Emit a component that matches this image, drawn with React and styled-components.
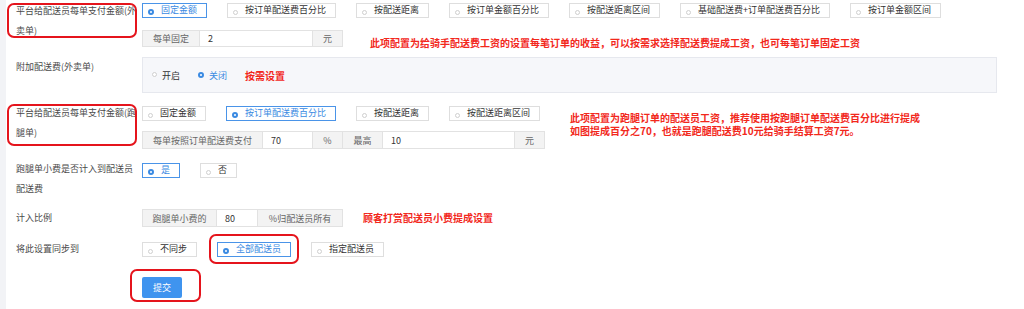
import React from 'react'
import styled, { createGlobalStyle, css } from 'styled-components'

const GlobalStyle = createGlobalStyle`
  body {
    margin: 0;
    background: #fff;
    font-family: "Noto Sans CJK SC", "Noto Sans", sans-serif;
  }
`

// red annotation frame drawn over a part
const mark = css`
  position: relative;
  &::after {
    content: '';
    position: absolute;
    inset: ${p => p.$mark};
    border: 2px solid #e5141c;
    border-radius: 7px;
    pointer-events: none;
  }
`

const Page = styled.div`
  width: 1024px;
  height: 309px;
  box-sizing: border-box;
  border-left: 6px solid #f2f3f6;
  padding: 1px 0 0 10px;
  display: flex;
  flex-direction: column;
  gap: 10px;
  overflow: hidden;
`

const Row = styled.div`
  display: grid;
  grid-template-columns: 126px 1fr;
  align-items: ${p => (p.$center ? 'center' : 'start')};
  margin-top: ${p => p.$mt || 0}px;
`

const Label = styled.div`
  width: 121px;
  font-size: 9px;
  line-height: ${p => p.$lh || 20}px;
  color: #4a4a4a;
  ${p => p.$mark && mark}
`

const Controls = styled.div`
  display: flex;
  flex-direction: column;
  align-items: flex-start;
  gap: ${p => p.$gap || 0}px;
  padding-top: ${p => p.$pt || 0}px;
`

const Line = styled.div`
  display: flex;
  align-items: flex-start;
  height: ${p => p.$h}px;
`

const Dot = styled.i`
  flex: none;
  box-sizing: border-box;
  width: ${p => (p.$on ? 6 : 5)}px;
  height: ${p => (p.$on ? 6 : 5)}px;
  border-radius: 50%;
  border: ${p => (p.$on ? '2px solid #3a8ae2' : '1px solid #cfcfcf')};
  background: #fff;
  margin: 0 ${p => p.$gap || 7}px 1px 0;
`

const RadioBox = styled.span`
  display: inline-flex;
  align-items: flex-end;
  height: 15px;
  box-sizing: border-box;
  border: 1px solid ${p => (p.$on ? '#4a94e8' : '#dedede')};
  padding: 0 9px 1px 5px;
  margin-right: 20px;
  font-size: 9px;
  line-height: 12px;
  color: ${p => (p.$on ? '#3a8ae2' : '#333')};
  white-space: nowrap;
  flex: none;
  ${p => p.$mark && mark}
`

const Panel = styled.div`
  width: 855px;
  height: 36px;
  box-sizing: border-box;
  background: #f6f7fa;
  border: 1px solid #e6e8ee;
  display: flex;
  align-items: center;
  padding-left: 9px;
`

const PlainRadio = styled.span`
  display: inline-flex;
  align-items: center;
  margin-right: 18px;
  font-size: 9px;
  color: ${p => (p.$on ? '#3a8ae2' : '#333')};
`

const Note = styled.span`
  color: #f2281c;
  font-weight: 700;
  font-size: 10px;
  line-height: 13px;
  white-space: nowrap;
  margin-left: ${p => p.$ml || 0}px;
  margin-top: ${p => p.$mt || 0}px;
`

const InputGroup = styled.div`
  display: flex;
  height: ${p => p.$h || 17}px;
  font-size: 9px;
  flex: none;
`

const Addon = styled.span`
  width: ${p => p.$w}px;
  box-sizing: border-box;
  border: 1px solid #e2e2e2;
  border-left: none;
  background: #f3f3f3;
  color: #666;
  display: flex;
  align-items: center;
  justify-content: center;
  white-space: nowrap;
  &:first-child {
    border-left: 1px solid #e2e2e2;
  }
`

const Field = styled.span`
  width: ${p => p.$w}px;
  box-sizing: border-box;
  border: 1px solid #e2e2e2;
  border-left: none;
  background: #fff;
  color: #333;
  display: flex;
  align-items: center;
  padding-left: 8px;
`

const Button = styled.button`
  width: 40px;
  height: 21px;
  border: none;
  border-radius: 2px;
  background: #3f94ef;
  color: #fff;
  font-family: inherit;
  font-size: 9px;
  padding: 0;
  ${p => p.$mark && mark}
`

const Radio = ({ on, mark, children }) => (
  <RadioBox $on={on} $mark={mark}>
    <Dot $on={on} />
    {children}
  </RadioBox>
)

const takeawayModes = ['固定金额', '按订单配送费百分比', '按配送距离', '按订单金额百分比', '按配送距离区间', '基础配送费+订单配送费百分比', '按订单金额区间']
const errandModes = ['固定金额', '按订单配送费百分比', '按配送距离', '按配送距离区间']

export default function App() {
  return (
    <Page>
      <GlobalStyle />

      <Row>
        <Label $mark="2px 0 3px -9px">平台给配送员每单支付金额(外卖单)</Label>
        <Controls $pt={2} $gap={12}>
          <Line $h={15}>
            {takeawayModes.map((m, i) => (
              <Radio key={m} on={i === 0}>{m}</Radio>
            ))}
          </Line>
          <Line $h={17}>
            <InputGroup>
              <Addon $w={58}>每单固定</Addon>
              <Field $w={113}>2</Field>
              <Addon $w={30}>元</Addon>
            </InputGroup>
            <Note $ml={27} $mt={6}>
              此项配置为给骑手配送费工资的设置每笔订单的收益，可以按需求选择配送费提成工资，也可每笔订单固定工资
            </Note>
          </Line>
        </Controls>
      </Row>

      <Row>
        <Label>附加配送费(外卖单)</Label>
        <Panel>
          <PlainRadio><Dot $gap={5} />开启</PlainRadio>
          <PlainRadio $on><Dot $on $gap={5} />关闭</PlainRadio>
          <Note>按需设置</Note>
        </Panel>
      </Row>

      <Row>
        <Label $mark="1px 0 -3px -9px">平台给配送员每单支付金额(跑腿单)</Label>
        <Controls $pt={3} $gap={10}>
          <Line $h={15}>
            {errandModes.map((m, i) => (
              <Radio key={m} on={i === 1}>{m}</Radio>
            ))}
            <Note $ml={10} $mt={5}>
              此项配置为跑腿订单的配送员工资，推荐使用按跑腿订单配送费百分比进行提成
              <br />
              如图提成百分之70，也就是跑腿配送费10元给骑手结算工资7元。
            </Note>
          </Line>
          <InputGroup $h={18}>
            <Addon $w={121}>每单按照订单配送费支付</Addon>
            <Field $w={50}>70</Field>
            <Addon $w={30}>%</Addon>
            <Addon $w={40}>最高</Addon>
            <Field $w={132}>10</Field>
            <Addon $w={30}>元</Addon>
          </InputGroup>
        </Controls>
      </Row>

      <Row>
        <Label>跑腿单小费是否计入到配送员配送费</Label>
        <Controls $pt={4}>
          <Line $h={15}>
            <Radio on>是</Radio>
            <Radio>否</Radio>
          </Line>
        </Controls>
      </Row>

      <Row $center>
        <Label $lh={18}>计入比例</Label>
        <Line $h={18}>
          <InputGroup $h={18}>
            <Addon $w={75}>跑腿单小费的</Addon>
            <Field $w={41}>80</Field>
            <Addon $w={85}>%归配送员所有</Addon>
          </InputGroup>
          <Note $ml={20} $mt={2}>顾客打赏配送员小费提成设置</Note>
        </Line>
      </Row>

      <Row $mt={2}>
        <Label>将此设置同步到</Label>
        <Controls $pt={3}>
          <Line $h={15}>
            <Radio>不同步</Radio>
            <Radio on mark="-9px -9px -8px -9px">全部配送员</Radio>
            <Radio>指定配送员</Radio>
          </Line>
        </Controls>
      </Row>

      <Row $mt={8}>
        <div />
        <Controls>
          <Button $mark="-8px -19px -4px -12px">提交</Button>
        </Controls>
      </Row>
    </Page>
  )
}
